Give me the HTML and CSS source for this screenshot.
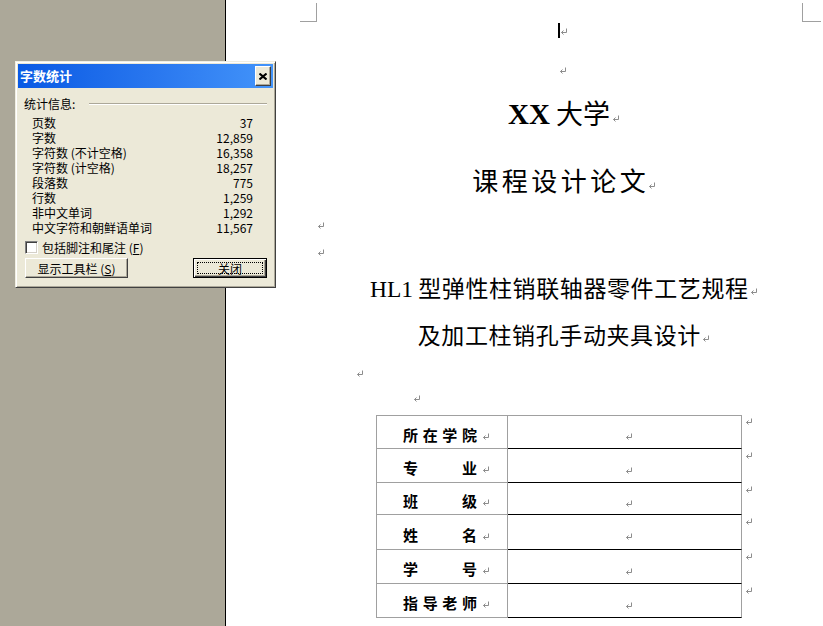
FILE: index.html
```html
<!DOCTYPE html>
<html lang="zh-CN">
<head>
<meta charset="utf-8">
<title>字数统计</title>
<link rel="stylesheet" href="styles.css">
</head>
<body>
<div class="app">
  <div class="side"></div>
  <div class="page">
    <div class="col">
      <div class="marks"><span class="mk mk-l"></span><span class="mk mk-r"></span></div>
      <div class="cur-ln"><span class="caret"></span><svg class="pmi pm-cur" width="7" height="7" viewBox="0 0 7 7"><path d="M6.5 0.5V4.5H1.5M3.5 2.5L1.5 4.5L3.5 6.5"/></svg></div>
      <div class="ep e1"><svg class="pmi" width="7" height="7" viewBox="0 0 7 7"><path d="M6.5 0.5V4.5H1.5M3.5 2.5L1.5 4.5L3.5 6.5"/></svg></div>
      <div class="t1"><span class="lat">XX</span> 大学<span class="pm"><svg class="pmi" width="7" height="7" viewBox="0 0 7 7"><path d="M6.5 0.5V4.5H1.5M3.5 2.5L1.5 4.5L3.5 6.5"/></svg></span></div>
      <div class="t2"><span class="sp">课程设计论文</span><span class="pm"><svg class="pmi" width="7" height="7" viewBox="0 0 7 7"><path d="M6.5 0.5V4.5H1.5M3.5 2.5L1.5 4.5L3.5 6.5"/></svg></span></div>
      <div class="ep e2"><svg class="pmi" width="7" height="7" viewBox="0 0 7 7"><path d="M6.5 0.5V4.5H1.5M3.5 2.5L1.5 4.5L3.5 6.5"/></svg></div>
      <div class="ep e3"><svg class="pmi" width="7" height="7" viewBox="0 0 7 7"><path d="M6.5 0.5V4.5H1.5M3.5 2.5L1.5 4.5L3.5 6.5"/></svg></div>
      <div class="t3"><span class="lat2">HL1</span> <span class="sp2">型弹性柱销联轴器零件工艺规程</span><span class="pm"><svg class="pmi" width="7" height="7" viewBox="0 0 7 7"><path d="M6.5 0.5V4.5H1.5M3.5 2.5L1.5 4.5L3.5 6.5"/></svg></span></div>
      <div class="t3 t4"><span class="sp2">及加工柱销孔手动夹具设计</span><span class="pm"><svg class="pmi" width="7" height="7" viewBox="0 0 7 7"><path d="M6.5 0.5V4.5H1.5M3.5 2.5L1.5 4.5L3.5 6.5"/></svg></span></div>
      <div class="ep e4"><svg class="pmi" width="7" height="7" viewBox="0 0 7 7"><path d="M6.5 0.5V4.5H1.5M3.5 2.5L1.5 4.5L3.5 6.5"/></svg></div>
      <div class="ep e5"><svg class="pmi" width="7" height="7" viewBox="0 0 7 7"><path d="M6.5 0.5V4.5H1.5M3.5 2.5L1.5 4.5L3.5 6.5"/></svg></div>

      <div class="tbl">
        <div class="row r1">
          <div class="c1"><span class="lab"><i>所</i><i>在</i><i>学</i><i>院</i></span><svg class="pmi" width="7" height="7" viewBox="0 0 7 7"><path d="M6.5 0.5V4.5H1.5M3.5 2.5L1.5 4.5L3.5 6.5"/></svg></div>
          <div class="c2"><svg class="pmi" width="7" height="7" viewBox="0 0 7 7"><path d="M6.5 0.5V4.5H1.5M3.5 2.5L1.5 4.5L3.5 6.5"/></svg></div>
          <div class="c3"><svg class="pmi" width="7" height="7" viewBox="0 0 7 7"><path d="M6.5 0.5V4.5H1.5M3.5 2.5L1.5 4.5L3.5 6.5"/></svg></div>
        </div>
        <div class="row r2">
          <div class="c1"><span class="lab"><i>专</i><i>业</i></span><svg class="pmi" width="7" height="7" viewBox="0 0 7 7"><path d="M6.5 0.5V4.5H1.5M3.5 2.5L1.5 4.5L3.5 6.5"/></svg></div>
          <div class="c2"><svg class="pmi" width="7" height="7" viewBox="0 0 7 7"><path d="M6.5 0.5V4.5H1.5M3.5 2.5L1.5 4.5L3.5 6.5"/></svg></div>
          <div class="c3"><svg class="pmi" width="7" height="7" viewBox="0 0 7 7"><path d="M6.5 0.5V4.5H1.5M3.5 2.5L1.5 4.5L3.5 6.5"/></svg></div>
        </div>
        <div class="row r3">
          <div class="c1"><span class="lab"><i>班</i><i>级</i></span><svg class="pmi" width="7" height="7" viewBox="0 0 7 7"><path d="M6.5 0.5V4.5H1.5M3.5 2.5L1.5 4.5L3.5 6.5"/></svg></div>
          <div class="c2"><svg class="pmi" width="7" height="7" viewBox="0 0 7 7"><path d="M6.5 0.5V4.5H1.5M3.5 2.5L1.5 4.5L3.5 6.5"/></svg></div>
          <div class="c3"><svg class="pmi" width="7" height="7" viewBox="0 0 7 7"><path d="M6.5 0.5V4.5H1.5M3.5 2.5L1.5 4.5L3.5 6.5"/></svg></div>
        </div>
        <div class="row r4">
          <div class="c1"><span class="lab"><i>姓</i><i>名</i></span><svg class="pmi" width="7" height="7" viewBox="0 0 7 7"><path d="M6.5 0.5V4.5H1.5M3.5 2.5L1.5 4.5L3.5 6.5"/></svg></div>
          <div class="c2"><svg class="pmi" width="7" height="7" viewBox="0 0 7 7"><path d="M6.5 0.5V4.5H1.5M3.5 2.5L1.5 4.5L3.5 6.5"/></svg></div>
          <div class="c3"><svg class="pmi" width="7" height="7" viewBox="0 0 7 7"><path d="M6.5 0.5V4.5H1.5M3.5 2.5L1.5 4.5L3.5 6.5"/></svg></div>
        </div>
        <div class="row r5">
          <div class="c1"><span class="lab"><i>学</i><i>号</i></span><svg class="pmi" width="7" height="7" viewBox="0 0 7 7"><path d="M6.5 0.5V4.5H1.5M3.5 2.5L1.5 4.5L3.5 6.5"/></svg></div>
          <div class="c2"><svg class="pmi" width="7" height="7" viewBox="0 0 7 7"><path d="M6.5 0.5V4.5H1.5M3.5 2.5L1.5 4.5L3.5 6.5"/></svg></div>
          <div class="c3"><svg class="pmi" width="7" height="7" viewBox="0 0 7 7"><path d="M6.5 0.5V4.5H1.5M3.5 2.5L1.5 4.5L3.5 6.5"/></svg></div>
        </div>
        <div class="row r6">
          <div class="c1"><span class="lab"><i>指</i><i>导</i><i>老</i><i>师</i></span><svg class="pmi" width="7" height="7" viewBox="0 0 7 7"><path d="M6.5 0.5V4.5H1.5M3.5 2.5L1.5 4.5L3.5 6.5"/></svg></div>
          <div class="c2"><svg class="pmi" width="7" height="7" viewBox="0 0 7 7"><path d="M6.5 0.5V4.5H1.5M3.5 2.5L1.5 4.5L3.5 6.5"/></svg></div>
          <div class="c3"><svg class="pmi" width="7" height="7" viewBox="0 0 7 7"><path d="M6.5 0.5V4.5H1.5M3.5 2.5L1.5 4.5L3.5 6.5"/></svg></div>
        </div>
      </div>
    </div>
  </div>
</div>

<div class="dlg">
  <div class="titlebar">
    <span class="ttl">字数统计</span>
    <span class="xbtn"><svg width="8" height="7" viewBox="0 0 8 7"><path d="M0.5 0.5L7.5 6.5M7.5 0.5L0.5 6.5"/></svg></span>
  </div>
  <div class="dbody">
    <div class="grp"><span>统计信息:</span><span class="groove"></span></div>
    <div class="stats">
      <div class="st"><span>页数</span><span>37</span></div>
      <div class="st"><span>字数</span><span>12,859</span></div>
      <div class="st"><span>字符数 (不计空格)</span><span>16,358</span></div>
      <div class="st"><span>字符数 (计空格)</span><span>18,257</span></div>
      <div class="st"><span>段落数</span><span>775</span></div>
      <div class="st"><span>行数</span><span>1,259</span></div>
      <div class="st"><span>非中文单词</span><span>1,292</span></div>
      <div class="st"><span>中文字符和朝鲜语单词</span><span>11,567</span></div>
    </div>
    <div class="chk"><span class="box"></span><span>包括脚注和尾注 (<u>F</u>)</span></div>
    <div class="btns">
      <span class="btn b1">显示工具栏 (<u>S</u>)</span>
      <span class="btn b2"><span class="focus">关闭</span></span>
    </div>
  </div>
</div>
</body>
</html>
```

FILE: styles.css
```css
html, body {
  margin: 0;
  padding: 0;
}
body {
  width: 823px;
  height: 626px;
  overflow: hidden;
  position: relative;
  font-family: "Noto Sans CJK SC", sans-serif;
  color: #000;
}

.app {
  display: flex;
  height: 626px;
}
.side {
  flex: none;
  width: 225px;
  background: #aca899;
  border-right: 1px solid #000;
}
.page {
  flex: 1;
  background: #fff;
  padding-left: 90px;
}
.col {
  width: 486px;
}

/* paragraph marks */
.pmi {
  display: block;
  overflow: visible;
}
.pmi path {
  fill: none;
  stroke: #8c8c8c;
  stroke-width: 1;
}
.pm {
  display: inline-block;
  width: 0;
  height: 7px;
  vertical-align: 2px;
}
.pm .pmi {
  margin-left: 2px;
}

/* corner marks */
.marks {
  display: flex;
  justify-content: space-between;
  margin: 3px -19px 0 -16px;
  height: 19px;
}
.mk {
  display: block;
  box-sizing: border-box;
  height: 19px;
  border-bottom: 1px solid #a0a0a0;
}
.mk-l {
  width: 17px;
  border-right: 1px solid #a0a0a0;
}
.mk-r {
  width: 19px;
  border-left: 1px solid #a0a0a0;
}

.cur-ln {
  display: flex;
  box-sizing: border-box;
  height: 18px;
  padding-left: 242px;
}
.caret {
  display: block;
  width: 2px;
  height: 15px;
  margin-top: 1px;
  background: #000;
}
.pm-cur {
  margin-top: 6px;
}

.ep {
  box-sizing: border-box;
}
.e1 { height: 40px; padding: 27px 0 0 243px; }
.e2 { height: 28px; padding: 22px 0 0 1px; }
.e3 { height: 28px; padding: 21px 0 0 1px; }
.e4 { height: 22px; padding: 16px 0 0 40px; }
.e5 { height: 25px; padding: 19px 0 0 97px; }

.t1 {
  margin-top: 11px;
  height: 44px;
  line-height: 44px;
  font-size: 27px;
  text-align: center;
  white-space: nowrap;
}
.lat {
  font-family: "Liberation Serif", serif;
  font-weight: bold;
  font-size: 29px;
}
.t2 {
  margin-top: 25px;
  height: 40px;
  line-height: 40px;
  font-size: 26px;
  text-align: center;
  white-space: nowrap;
}
.sp {
  letter-spacing: 3.5px;
  margin-right: -3.5px;
}
.t3 {
  margin-top: 11px;
  height: 40px;
  line-height: 40px;
  font-size: 23px;
  text-align: center;
  white-space: nowrap;
}
.t4 {
  margin-top: 7px;
}
.lat2 {
  font-family: "Liberation Serif", serif;
  font-size: 23.5px;
}
.sp2 {
  letter-spacing: 0.6px;
  margin-right: -0.6px;
}

/* table */
.tbl {
  margin: 14px 0 0 60px;
}
.row {
  display: flex;
  height: 34px;
}
.r3 { height: 32px; }
.r4 { height: 35px; }
.c1, .c2 {
  box-sizing: border-box;
  height: 100%;
  display: flex;
  align-items: center;
}
.c1 {
  width: 132px;
  border-left: 1px solid #a0a0a0;
  border-right: 1px solid #a0a0a0;
  border-bottom: 1px solid #a0a0a0;
  padding: 4px 0 0 26px;
}
.c2 {
  width: 234px;
  border-right: 1px solid #a0a0a0;
  border-bottom: 1px solid #000;
  padding: 9px 0 0 117px;
}
.r1 .c1, .r1 .c2 {
  border-top: 1px solid #a0a0a0;
}
.c3 {
  padding: 3px 0 0 3px;
}
.lab {
  display: flex;
  justify-content: space-between;
  width: 74px;
  font-size: 15px;
  line-height: 15px;
  font-weight: bold;
}
.lab i {
  font-style: normal;
}
.c1 .pmi {
  margin: 4px 0 0 5px;
}

/* dialog */
.dlg {
  position: absolute;
  left: 15px;
  top: 61px;
  width: 261px;
  height: 227px;
  box-sizing: border-box;
  padding: 2px;
  background: #ece9d8;
  border: 1px solid;
  border-color: #f1efe2 #404040 #404040 #f1efe2;
  box-shadow: inset 1px 1px #fff, inset -1px -1px #aca899;
  font-size: 12px;
  line-height: 15px;
}
.titlebar {
  height: 24px;
  display: flex;
  align-items: center;
  justify-content: space-between;
  padding: 0 2px;
  background: linear-gradient(90deg, #0a5ae4 0%, #2a78ef 55%, #4394fa 100%);
}
.ttl {
  color: #fff;
  font-weight: bold;
  font-size: 13px;
  line-height: 16px;
}
.xbtn {
  box-sizing: border-box;
  width: 16px;
  height: 20px;
  display: flex;
  align-items: center;
  justify-content: center;
  background: #ece9d8;
  border: 1px solid;
  border-color: #fff #404040 #404040 #fff;
  box-shadow: inset -1px -1px #aca899;
}
.xbtn path {
  stroke: #000;
  stroke-width: 2;
  fill: none;
}
.dbody {
  padding: 8px 6px 0 6px;
}
.grp {
  display: flex;
  align-items: center;
  height: 15px;
}
.groove {
  flex: 1;
  margin-left: 14px;
  border-top: 1px solid #aca899;
  border-bottom: 1px solid #fff;
}
.stats {
  margin: 4px 14px 0 8px;
}
.st {
  display: flex;
  justify-content: space-between;
  height: 15px;
  white-space: nowrap;
}
.chk {
  display: flex;
  align-items: center;
  height: 13px;
  margin: 6px 0 0 1px;
  white-space: nowrap;
}
.box {
  box-sizing: border-box;
  width: 13px;
  height: 13px;
  margin-right: 4px;
  background: #fff;
  border: 1px solid;
  border-color: #808080 #fff #fff #808080;
  box-shadow: inset 1px 1px #404040, inset -1px -1px #d4d0c8;
}
.btns {
  display: flex;
  justify-content: space-between;
  margin: 4px 0 0 1px;
}
.btn {
  box-sizing: border-box;
  height: 20px;
  display: flex;
  align-items: center;
  justify-content: center;
  background: #ece9d8;
  white-space: nowrap;
}
.b1 {
  width: 103px;
  border: 1px solid;
  border-color: #fff #404040 #404040 #fff;
  box-shadow: inset -1px -1px #aca899;
}
.b2 {
  width: 74px;
  border: 1px solid #000;
  box-shadow: inset 1px 1px #fff, inset -1px -1px #404040, inset -2px -2px #aca899;
  padding: 3px;
}
.focus {
  flex: 1;
  align-self: stretch;
  display: flex;
  align-items: center;
  justify-content: center;
  border: 1px dotted #000;
}
u {
  text-decoration: underline;
}
```
